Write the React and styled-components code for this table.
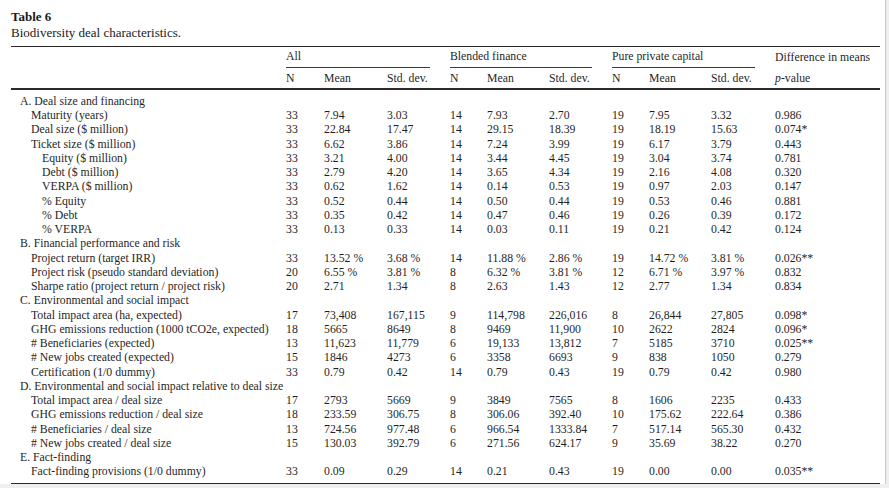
import React from "react";
import styled, { createGlobalStyle } from "styled-components";

const Global = createGlobalStyle`
  html, body {
    margin: 0;
    padding: 0;
    background: #efefef;
  }
  body {
    font-family: "Liberation Serif", "Times New Roman", serif;
    color: #1f1f1f;
  }
`;

const Page = styled.div`
  width: 886px;
  height: 484px;
  background: #ffffff;
  border-right: 1px solid #c9c9c9;
  box-sizing: border-box;
  padding: 10px 0 0 11px;
  overflow: hidden;
`;

const Caption = styled.div`
  font-size: 13px;
  line-height: 13px;
  font-weight: ${(p) => (p.bold ? 700 : 400)};
  margin-bottom: ${(p) => (p.bold ? "3px" : "0")};
  color: #1a1a1a;
`;

const Table = styled.table`
  margin-top: 7px;
  width: 869px;
  border-collapse: collapse;
  table-layout: fixed;
  font-size: 11.75px;
  border-top: 1.5px solid #2a2a2a;
  border-bottom: 2px solid #2a2a2a;
`;

const HeadRow = styled.tr`
  height: 21px;
  border-bottom: ${(p) => (p.rule ? "2px solid #2a2a2a" : "none")};
`;

const Th = styled.th`
  text-align: left;
  font-weight: 400;
  padding: 0;
  vertical-align: middle;
  white-space: nowrap;
`;

const Group = styled.span`
  display: block;
  line-height: 20px;
  margin-right: ${(p) => (p.line ? "20px" : "0")};
  border-bottom: ${(p) => (p.line ? "1px solid #3a3a3a" : "none")};
`;

const Row = styled.tr`
  height: 14.26px;
`;

const Td = styled.td`
  padding: 0 0 0 ${(p) => p.indent || 0}px;
  line-height: 14px;
  white-space: nowrap;
  text-align: left;
  padding-top: ${(p) => (p.first ? "5px" : "0")};
  padding-bottom: ${(p) => (p.last ? "4px" : "0")};
`;

const cols = [275, 38, 63, 63, 37, 62, 63, 37, 62, 64, 105];

const rows = [
  { s: "A. Deal size and financing" },
  { l: "Maturity (years)", v: ["33", "7.94", "3.03", "14", "7.93", "2.70", "19", "7.95", "3.32", "0.986"] },
  { l: "Deal size ($ million)", v: ["33", "22.84", "17.47", "14", "29.15", "18.39", "19", "18.19", "15.63", "0.074*"] },
  { l: "Ticket size ($ million)", v: ["33", "6.62", "3.86", "14", "7.24", "3.99", "19", "6.17", "3.79", "0.443"] },
  { l: "Equity ($ million)", sub: true, v: ["33", "3.21", "4.00", "14", "3.44", "4.45", "19", "3.04", "3.74", "0.781"] },
  { l: "Debt ($ million)", sub: true, v: ["33", "2.79", "4.20", "14", "3.65", "4.34", "19", "2.16", "4.08", "0.320"] },
  { l: "VERPA ($ million)", sub: true, v: ["33", "0.62", "1.62", "14", "0.14", "0.53", "19", "0.97", "2.03", "0.147"] },
  { l: "% Equity", sub: true, v: ["33", "0.52", "0.44", "14", "0.50", "0.44", "19", "0.53", "0.46", "0.881"] },
  { l: "% Debt", sub: true, v: ["33", "0.35", "0.42", "14", "0.47", "0.46", "19", "0.26", "0.39", "0.172"] },
  { l: "% VERPA", sub: true, v: ["33", "0.13", "0.33", "14", "0.03", "0.11", "19", "0.21", "0.42", "0.124"] },
  { s: "B. Financial performance and risk" },
  { l: "Project return (target IRR)", v: ["33", "13.52 %", "3.68 %", "14", "11.88 %", "2.86 %", "19", "14.72 %", "3.81 %", "0.026**"] },
  { l: "Project risk (pseudo standard deviation)", v: ["20", "6.55 %", "3.81 %", "8", "6.32 %", "3.81 %", "12", "6.71 %", "3.97 %", "0.832"] },
  { l: "Sharpe ratio (project return / project risk)", v: ["20", "2.71", "1.34", "8", "2.63", "1.43", "12", "2.77", "1.34", "0.834"] },
  { s: "C. Environmental and social impact" },
  { l: "Total impact area (ha, expected)", v: ["17", "73,408", "167,115", "9", "114,798", "226,016", "8", "26,844", "27,805", "0.098*"] },
  { l: "GHG emissions reduction (1000 tCO2e, expected)", v: ["18", "5665", "8649", "8", "9469", "11,900", "10", "2622", "2824", "0.096*"] },
  { l: "# Beneficiaries (expected)", v: ["13", "11,623", "11,779", "6", "19,133", "13,812", "7", "5185", "3710", "0.025**"] },
  { l: "# New jobs created (expected)", v: ["15", "1846", "4273", "6", "3358", "6693", "9", "838", "1050", "0.279"] },
  { l: "Certification (1/0 dummy)", v: ["33", "0.79", "0.42", "14", "0.79", "0.43", "19", "0.79", "0.42", "0.980"] },
  { s: "D. Environmental and social impact relative to deal size" },
  { l: "Total impact area / deal size", v: ["17", "2793", "5669", "9", "3849", "7565", "8", "1606", "2235", "0.433"] },
  { l: "GHG emissions reduction / deal size", v: ["18", "233.59", "306.75", "8", "306.06", "392.40", "10", "175.62", "222.64", "0.386"] },
  { l: "# Beneficiaries / deal size", v: ["13", "724.56", "977.48", "6", "966.54", "1333.84", "7", "517.14", "565.30", "0.432"] },
  { l: "# New jobs created / deal size", v: ["15", "130.03", "392.79", "6", "271.56", "624.17", "9", "35.69", "38.22", "0.270"] },
  { s: "E. Fact-finding" },
  { l: "Fact-finding provisions (1/0 dummy)", v: ["33", "0.09", "0.29", "14", "0.21", "0.43", "19", "0.00", "0.00", "0.035**"] },
];

const App = () => {
  return (
    <>
      <Global />
      <Page>
        <Caption bold>Table 6</Caption>
        <Caption>Biodiversity deal characteristics.</Caption>
        <Table>
          <colgroup>
            {cols.map((w, i) => (
              <col key={i} style={{ width: w }} />
            ))}
          </colgroup>
          <thead>
            <HeadRow>
              <Th />
              <Th colSpan={3}>
                <Group line>All</Group>
              </Th>
              <Th colSpan={3}>
                <Group line>Blended finance</Group>
              </Th>
              <Th colSpan={3}>
                <Group line>Pure private capital</Group>
              </Th>
              <Th>
                <Group>Difference in means</Group>
              </Th>
            </HeadRow>
            <HeadRow rule>
              <Th />
              {["N", "Mean", "Std. dev.", "N", "Mean", "Std. dev.", "N", "Mean", "Std. dev."].map((h, i) => (
                <Th key={i}>{h}</Th>
              ))}
              <Th>
                <i>p</i>-value
              </Th>
            </HeadRow>
          </thead>
          <tbody>
            {rows.map((r, i) => {
              const first = i === 0;
              const last = i === rows.length - 1;
              if (r.s) {
                return (
                  <Row key={i}>
                    <Td indent={9} colSpan={11} first={first} last={last}>
                      {r.s}
                    </Td>
                  </Row>
                );
              }
              return (
                <Row key={i}>
                  <Td indent={r.sub ? 31 : 20} first={first} last={last}>
                    {r.l}
                  </Td>
                  {r.v.map((v, j) => (
                    <Td key={j} first={first} last={last}>
                      {v}
                    </Td>
                  ))}
                </Row>
              );
            })}
          </tbody>
        </Table>
      </Page>
    </>
  );
};

export default App;
